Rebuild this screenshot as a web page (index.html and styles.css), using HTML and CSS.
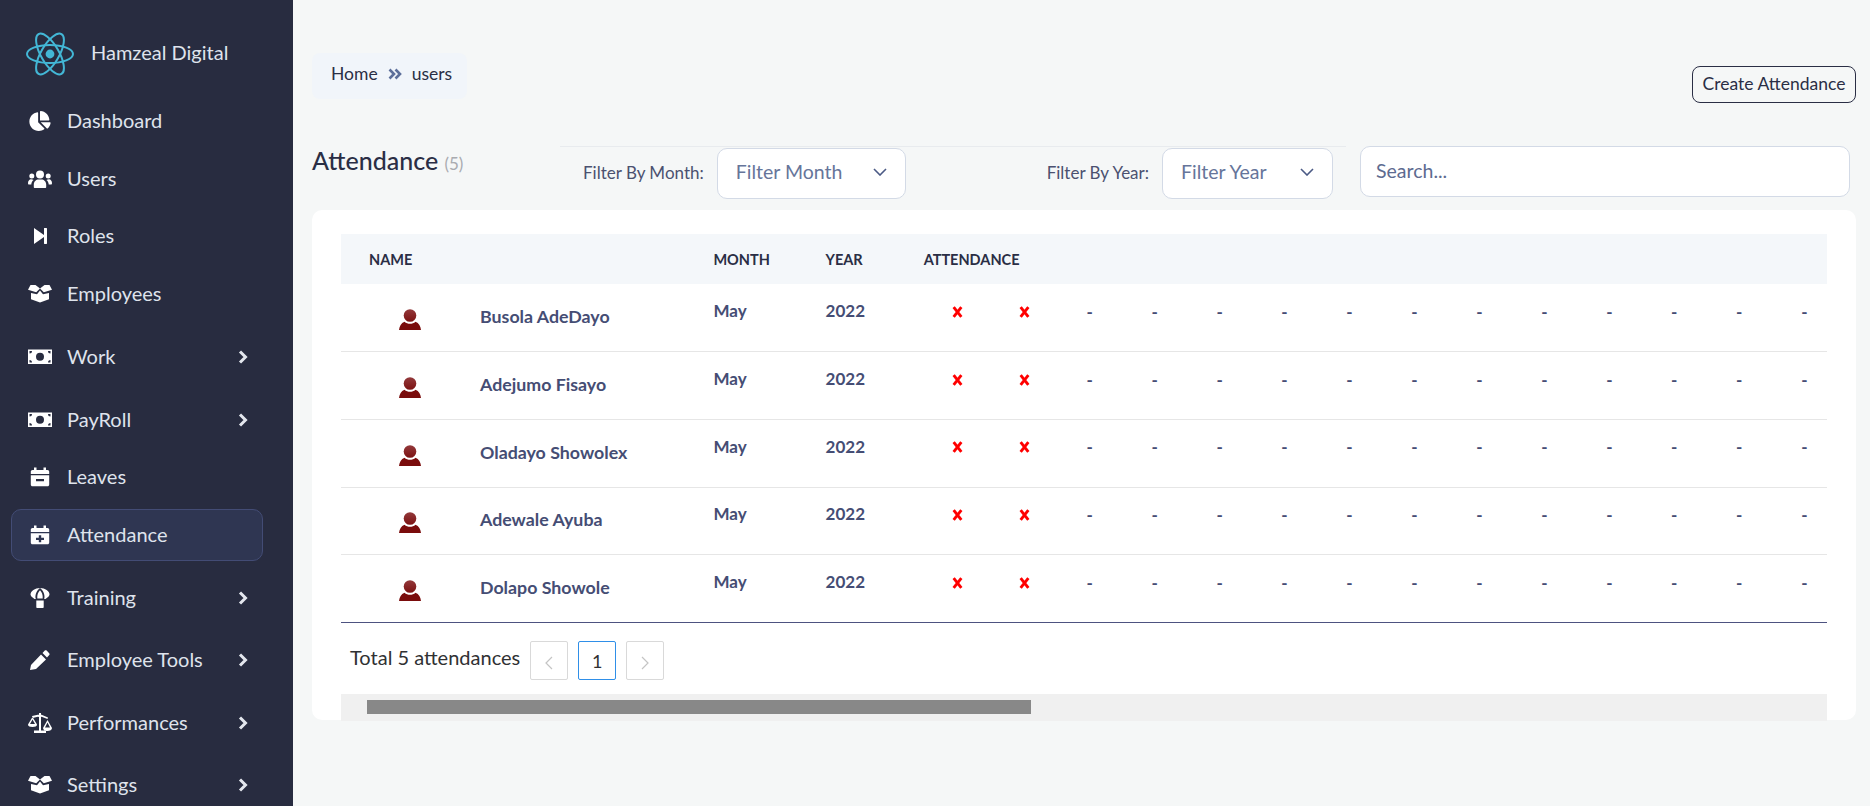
FILE: index.html
```html
<!doctype html>
<html>
<head>
<meta charset="utf-8">
<title>Attendance</title>
<link rel="stylesheet" href="styles.css">
</head>
<body>
<div class="app">
  <aside class="sidebar">
    <div class="brand">
      <svg class="logo" viewBox="0 0 48 44" fill="none" stroke="#43b7d6" stroke-width="2">
        <ellipse cx="24" cy="22" rx="23" ry="9"/>
        <ellipse cx="24" cy="22" rx="23" ry="9" transform="rotate(60 24 22)"/>
        <ellipse cx="24" cy="22" rx="23" ry="9" transform="rotate(120 24 22)"/>
        <circle cx="24" cy="22" r="4.4" fill="#43b7d6" stroke="none"/>
      </svg>
      <span>Hamzeal Digital</span>
    </div>
    <nav>
      <a class="nav-item">
        <svg class="ico" viewBox="0 0 544 512"><path d="M527.79 288H290.5l158.03 158.03c6.04 6.04 15.98 6.53 22.19 .68 38.7-36.46 65.32-85.61 73.13-140.86 1.34-9.46-6.51-17.85-16.06-17.85zm-15.83-64.8C503.72 103.74 408.26 8.28 288.8 .04 279.68-.59 272 7.1 272 16.24V240h223.77c9.14 0 16.82-7.68 16.19-16.8zM224 288V50.71c0-9.55-8.39-17.4-17.84-16.06C86.99 51.49-4.1 155.6 .14 280.37 4.5 408.51 114.83 513.59 243.03 511.98c50.4-.63 96.97-16.87 135.26-44.03 7.9-5.6 8.42-17.23 1.57-24.08L224 288z"/></svg>
        <span>Dashboard</span>
      </a>
      <a class="nav-item">
        <svg class="ico" viewBox="0 0 24 18"><circle cx="12" cy="4.6" r="4"/><circle cx="3.8" cy="6" r="2.5"/><circle cx="20.2" cy="6" r="2.5"/><path d="M5.8 17v-2.400c0-3 2.400-5 4.600-5h3.200c2.200 0 4.600 2 4.600 5V17c0 .6-.4 1-1 1H6.800c-.6 0-1-.4-1-1zM0 13c0-2 1.300-3.800 3-3.800 1 0 1.900.300 2.600.900-1.400 1-2.300 2.700-2.300 4.400H1c-.6 0-1-.4-1-1.500zM24 13c0-2-1.300-3.800-3-3.800-1 0-1.900.300-2.600.900 1.400 1 2.300 2.700 2.300 4.400H23c.6 0 1-.4 1-1.500z"/></svg>
        <span>Users</span>
      </a>
      <a class="nav-item">
        <svg class="ico" viewBox="0 0 24 18"><path d="M6 1l10 7V1.500c0-.4.3-.5.500-.5h1.900c.3 0 .6.200.6.500v15c0 .3-.3.500-.6.500h-1.900c-.3 0-.5-.2-.5-.5V10L6 17z"/></svg>
        <span>Roles</span>
      </a>
      <a class="nav-item">
        <svg class="ico" viewBox="0 0 24 18"><path d="M12 5.500l-3 3.800-6-1.400v6.300l9 3.300 9-3.300V7.900l-6 1.400zM2.500 0L0 4.700l8.200 2.500L12 3.500 7.500 0zM21.500 0L24 4.700l-8.200 2.500L12 3.500 16.500 0z"/></svg>
        <span>Employees</span>
      </a>
      <a class="nav-item has-sub">
        <svg class="ico" viewBox="0 0 24 15"><path fill-rule="evenodd" d="M0 0h24v14.500H0zM12 3.200a4 4 0 1 0 0 8 4 4 0 0 0 0-8zM1.500 1.500v2.500A2.500 2.500 0 0 0 4 1.500zM20 1.500a2.500 2.500 0 0 0 2.500 2.500V1.500zM1.500 10.500V13H4a2.500 2.500 0 0 0-2.500-2.500zM22.500 10.500A2.500 2.500 0 0 0 20 13h2.500z"/></svg>
        <span>Work</span>
        <svg class="chev" viewBox="0 0 10 14"><path d="M2 1.500L7.500 7 2 12.500"/></svg>
      </a>
      <a class="nav-item has-sub">
        <svg class="ico" viewBox="0 0 24 15"><path fill-rule="evenodd" d="M0 0h24v14.500H0zM12 3.200a4 4 0 1 0 0 8 4 4 0 0 0 0-8zM1.500 1.500v2.500A2.500 2.500 0 0 0 4 1.500zM20 1.500a2.500 2.500 0 0 0 2.500 2.500V1.500zM1.500 10.500V13H4a2.500 2.500 0 0 0-2.500-2.500zM22.500 10.500A2.500 2.500 0 0 0 20 13h2.500z"/></svg>
        <span>PayRoll</span>
        <svg class="chev" viewBox="0 0 10 14"><path d="M2 1.500L7.500 7 2 12.500"/></svg>
      </a>
      <a class="nav-item">
        <svg class="ico" viewBox="0 0 24 19"><path fill-rule="evenodd" d="M6 0h2.500v2.500h7V0H18v2.500h1.500c1 0 1.700.8 1.700 1.700V6.500H2.800V4.200c0-.9.7-1.700 1.700-1.700H6zM2.800 7.800h18.400V17c0 1-.7 1.800-1.700 1.800h-15c-1 0-1.700-.8-1.700-1.800zM8 11.500v2.300h8v-2.300z"/></svg>
        <span>Leaves</span>
      </a>
      <a class="nav-item active">
        <svg class="ico" viewBox="0 0 24 19"><path fill-rule="evenodd" d="M6 0h2.500v2.500h7V0H18v2.500h1.500c1 0 1.700.8 1.700 1.700V6.500H2.800V4.200c0-.9.7-1.700 1.700-1.700H6zM2.800 7.800h18.400V17c0 1-.7 1.800-1.700 1.800h-15c-1 0-1.700-.8-1.700-1.800zM10.800 9.800v2.400H8v2.200h2.800v2.400h2.400v-2.400H16v-2.200h-2.800V9.800z"/></svg>
        <span>Attendance</span>
      </a>
      <a class="nav-item has-sub">
        <svg class="ico" viewBox="0 0 24 20"><path d="M12 0C7 0 2.500 3 2.500 6.500c0 1 1 2.500 4 4.500h1.300C6.800 8 8 3 12 0zM12 0c5 0 9.500 3 9.500 6.500 0 1-1 2.500-4 4.500h-1.300C17.200 8 16 3 12 0zM12 2.300C10 4.300 9 7 9.300 10.500h5.400C15 7 14 4.300 12 2.300zM8.300 12.500h7.400V19c0 .6-.4 1-1 1H9.300c-.6 0-1-.4-1-1z"/></svg>
        <span>Training</span>
        <svg class="chev" viewBox="0 0 10 14"><path d="M2 1.500L7.500 7 2 12.500"/></svg>
      </a>
      <a class="nav-item has-sub">
        <svg class="ico" viewBox="0 0 24 20"><path d="M3 15l10-10.500 5 5L8 19l-6 1zM14.500 3l2.300-2.400c.5-.5 1.300-.5 1.800 0l2.600 2.600c.5.500.5 1.300 0 1.800L19 7.500z"/></svg>
        <span>Employee Tools</span>
        <svg class="chev" viewBox="0 0 10 14"><path d="M2 1.500L7.500 7 2 12.500"/></svg>
      </a>
      <a class="nav-item has-sub">
        <svg class="ico" viewBox="0 0 24 20"><path fill-rule="evenodd" d="M11 0h2v17.500h5V20H6v-2.500h5zM4 3l7-1.500v2L4.500 5zM13 1.500l7 3-.5 1.500-6.500-2.500zM4.500 4L0 11.500c0 1.800 2 2.500 4.500 2.500S9 13.300 9 11.500zM4.500 6.500L2 11h5zM19.500 7L15 15c0 1.800 2 3 4.500 3s4.500-1.200 4.500-3zM19.500 9.500L17 14.500h5z"/></svg>
        <span>Performances</span>
        <svg class="chev" viewBox="0 0 10 14"><path d="M2 1.500L7.500 7 2 12.500"/></svg>
      </a>
      <a class="nav-item has-sub">
        <svg class="ico" viewBox="0 0 24 18"><path d="M12 5.500l-3 3.800-6-1.400v6.300l9 3.300 9-3.300V7.900l-6 1.400zM2.500 0L0 4.700l8.200 2.500L12 3.500 7.500 0zM21.500 0L24 4.700l-8.200 2.500L12 3.500 16.500 0z"/></svg>
        <span>Settings</span>
        <svg class="chev" viewBox="0 0 10 14"><path d="M2 1.500L7.500 7 2 12.500"/></svg>
      </a>
    </nav>
  </aside>

  <main class="main">
    <div class="topbar">
      <div class="crumbs">
        <span>Home</span>
        <svg class="crumb-sep" viewBox="0 0 14 12"><path d="M1.500 1.500L6 6l-4.500 4.500M7.500 1.500L12 6l-4.500 4.500"/></svg>
        <span>users</span>
      </div>
      <button class="btn-create">Create Attendance</button>
    </div>

    <div class="toolbar">
      <h1 class="page-title">Attendance <small>(5)</small></h1>
      <div class="filters">
        <div class="filter">
          <label>Filter By Month:</label>
          <div class="select month-select">
            <span>Filter Month</span>
            <svg class="sel-arrow" viewBox="0 0 14 8"><path d="M1 1l6 6 6-6"/></svg>
          </div>
        </div>
        <div class="filter">
          <label>Filter By Year:</label>
          <div class="select year-select">
            <span>Filter Year</span>
            <svg class="sel-arrow" viewBox="0 0 14 8"><path d="M1 1l6 6 6-6"/></svg>
          </div>
        </div>
      </div>
      <input class="search" type="text" placeholder="Search...">
    </div>

    <section class="card">
      <div class="table-wrap">
        <table class="att-table">
          <colgroup>
            <col class="col-name"><col class="col-month"><col class="col-year">
            <col class="col-first"><col class="col-day"><col class="col-day"><col class="col-day"><col class="col-day"><col class="col-day"><col class="col-day"><col class="col-day"><col class="col-day"><col class="col-day"><col class="col-day"><col class="col-day"><col class="col-day"><col class="col-day">
          </colgroup>
          <thead>
            <tr><th>Name</th><th>Month</th><th>Year</th><th colspan="14">Attendance</th></tr>
          </thead>
          <tbody id="rows"></tbody>
        </table>
      </div>
      <div class="pager">
        <span class="total">Total 5 attendances</span>
        <button class="page-btn"><svg viewBox="0 0 8 14"><path d="M7 1L1 7l6 6"/></svg></button>
        <button class="page-btn current">1</button>
        <button class="page-btn"><svg viewBox="0 0 8 14"><path d="M1 1l6 6-6 6"/></svg></button>
      </div>
      <div class="hscroll"><div class="hscroll-thumb"></div></div>
    </section>
  </main>
</div>
<script>
  var names = ["Busola AdeDayo", "Adejumo Fisayo", "Oladayo Showolex", "Adewale Ayuba", "Dolapo Showole"];
  var cross = '<svg class="cross" viewBox="0 0 10 10"><path d="M1.500 .5l7 9M8.500 .5l-7 9"/></svg>';
  var avatar = '<svg class="avatar" viewBox="0 0 22 21"><defs><linearGradient id="head" x1="0" y1="0" x2="0" y2="1"><stop offset="0" stop-color="#93393b"/><stop offset="1" stop-color="#7c1212"/></linearGradient></defs><circle cx="11" cy="6.500" r="6.300" fill="url(#head)"/><path d="M0 21c.5-4 2-7 5.500-8.300 1.500 1.500 3.500 2 5.500 2s4-.5 5.500-2C20 14 21.500 17 22 21z" fill="#7a0c0c"/></svg>';
  var html = "";
  for (var i = 0; i < names.length; i++) {
    html += '<tr><td class="name-cell"><div class="person">' + avatar + '<span>' + names[i] + '</span></div></td>';
    html += '<td class="up">May</td><td class="up">2022</td>';
    html += '<td class="mark first">' + cross + '</td><td class="mark">' + cross + '</td>';
    for (var d = 0; d < 12; d++) {
      html += '<td class="mark">-</td>';
    }
    html += '</tr>';
  }
  document.getElementById("rows").innerHTML = html;
</script>
</body>
</html>
```

FILE: styles.css
```css
* {
  box-sizing: border-box;
}
html, body {
  margin: 0;
  height: 100%;
  overflow: hidden;
}
body {
  font-family: "Lato", "Noto Sans", sans-serif;
  background-color: #f5f7f7;
  color: #2a2e45;
}
.app {
  display: flex;
  height: 806px;
}

/* sidebar */
.sidebar {
  width: 293px;
  flex: none;
  height: 806px;
  overflow: hidden;
  background-color: #282c40;
  color: #dfe3ec;
  padding-top: 30px;
}
.brand {
  display: flex;
  align-items: center;
  gap: 17px;
  padding-left: 26px;
  height: 48px;
  font-size: 20px;
  margin-bottom: 14px;
}
.brand span {
  margin-bottom: 4px;
}
.logo {
  width: 48px;
  height: 44px;
}
.nav-item {
  display: flex;
  align-items: center;
  height: 57.700px;
  margin: 0 30px 0 11px;
  padding-left: 16px;
  font-size: 20px;
  border: 1px solid transparent;
  border-radius: 10px;
}
.nav-item span {
  margin-bottom: 2px;
}
.nav-item.has-sub {
  height: 62.500px;
  padding-top: 6px;
}
.nav-item.active {
  height: 52px;
  margin-top: 4px;
  margin-bottom: 2px;
  background-color: #2f3652;
  border-color: #434c75;
}
.ico {
  width: 24px;
  height: 20px;
  flex: none;
  fill: #fff;
  margin-right: 15px;
}
.chev {
  width: 10px;
  height: 14px;
  margin-left: auto;
  margin-right: 14px;
  fill: none;
  stroke: #e4e7ee;
  stroke-width: 3;
}

/* main */
.main {
  flex: 1;
  min-width: 0;
  padding: 0 14px 0 19px;
}
.topbar {
  display: flex;
  justify-content: space-between;
  align-items: flex-start;
  height: 146px;
}
.crumbs {
  margin-top: 53px;
  height: 46px;
  width: 155px;
  display: flex;
  align-items: center;
  padding: 0 0 5px 19px;
  gap: 10px;
  font-size: 17.500px;
  background-color: #f1f5fa;
  border-radius: 8px;
}
.crumb-sep {
  width: 14px;
  height: 12px;
  fill: none;
  stroke: #5d6f9a;
  stroke-width: 2.600;
}
.btn-create {
  margin-top: 66px;
  height: 37px;
  width: 164px;
  padding: 0 0 2px;
  font-family: inherit;
  font-size: 17.500px;
  color: #2a2e45;
  background-color: #f5f7f7;
  border: 1px solid #2a2e45;
  border-radius: 8px;
}

.toolbar {
  display: flex;
  align-items: flex-start;
  height: 64px;
  margin-right: 6px;
}
.page-title {
  width: 248px;
  flex: none;
  margin: -1px 0 0;
  line-height: 30px;
  font-size: 25px;
  font-weight: 500;
  color: #2a2e45;
}
.page-title small {
  font-size: 17px;
  font-weight: 400;
  color: #a9abb0;
}
.filters {
  width: 786px;
  flex: none;
  display: flex;
  justify-content: space-between;
  padding: 1px 13px 0 23px;
  border-top: 1px solid #e8ebee;
}
.filter {
  display: flex;
  align-items: center;
  gap: 13px;
  font-size: 17px;
  color: #4b5170;
}
.filter label {
  margin-bottom: 3px;
}
.select {
  height: 51px;
  display: flex;
  align-items: center;
  justify-content: space-between;
  padding: 0 18px 4px 18px;
  font-size: 19.500px;
  color: #66759a;
  background-color: #fff;
  border: 1px solid #d3dae6;
  border-radius: 10px;
}
.month-select {
  width: 189px;
}
.year-select {
  width: 171px;
}
.sel-arrow {
  width: 14px;
  height: 8px;
  fill: none;
  stroke: #4b5a85;
  stroke-width: 1.600;
}
.search {
  width: 490px;
  height: 51px;
  margin-left: 14px;
  padding: 0 15px 2px;
  font-family: inherit;
  font-size: 19.500px;
  color: #2a2e45;
  background-color: #fff;
  border: 1px solid #d3dae6;
  border-radius: 10px;
}
.search::placeholder {
  color: #5d6b90;
  opacity: 1;
}

/* card and table */
.card {
  width: 1544px;
  height: 510px;
  padding: 24px 29px 0;
  background-color: #fff;
  border-radius: 10px;
}
.table-wrap {
  overflow: hidden;
}
.att-table {
  width: 1495.500px;
  table-layout: fixed;
  border-collapse: collapse;
}
.col-name { width: 359px; }
.col-month { width: 112px; }
.col-year { width: 98px; }
.col-first { width: 81px; }
.col-day { width: 64.900px; }
.att-table th {
  height: 50px;
  padding: 0 0 0 13px;
  text-align: left;
  font-size: 14.500px;
  font-weight: 700;
  text-transform: uppercase;
  color: #2a2e45;
  background-color: #f4f7fa;
}
.att-table th:first-child {
  padding-left: 28px;
}
.att-table td {
  height: 67.700px;
  padding: 0;
  font-size: 17px;
  font-weight: 700;
  color: #454d74;
  border-bottom: 1px solid #e6e6e6;
}
.att-table tr:last-child td {
  border-bottom-color: #4d5280;
}
.att-table td.up {
  padding: 0 0 14px 13px;
}
.att-table td.mark {
  padding: 0 0 13px 1px;
  text-align: center;
}
.att-table td.first {
  padding-left: 13px;
}
.person {
  display: flex;
  align-items: center;
  gap: 59px;
  padding: 4px 0 0 58px;
  font-size: 17.800px;
}
.person span {
  margin-bottom: 7px;
}
.avatar {
  width: 22px;
  height: 21px;
  flex: none;
}
.cross {
  width: 11px;
  height: 12px;
  fill: none;
  stroke: #f00;
  stroke-width: 2.600;
}

/* pagination */
.pager {
  display: flex;
  align-items: flex-start;
  height: 71px;
  padding: 18px 0 0 9px;
}
.total {
  margin-right: 10px;
  font-size: 20px;
  line-height: 32px;
  color: #303133;
}
.page-btn {
  width: 38px;
  height: 39px;
  margin-right: 10px;
  padding: 6px 0 0;
  font-family: inherit;
  font-size: 18px;
  color: #303133;
  background-color: #fff;
  border: 1px solid #d9d9d9;
  border-radius: 2px;
}
.page-btn svg {
  width: 8px;
  height: 14px;
  fill: none;
  stroke: #c4c4c4;
  stroke-width: 1.200;
}
.page-btn.current {
  padding-top: 1px;
  border-color: #2f8fe8;
}
.hscroll {
  height: 27px;
  padding: 6px 0 0 26px;
  background-color: #f0f0f0;
}
.hscroll-thumb {
  width: 664px;
  height: 14px;
  background-color: #888;
}
```
